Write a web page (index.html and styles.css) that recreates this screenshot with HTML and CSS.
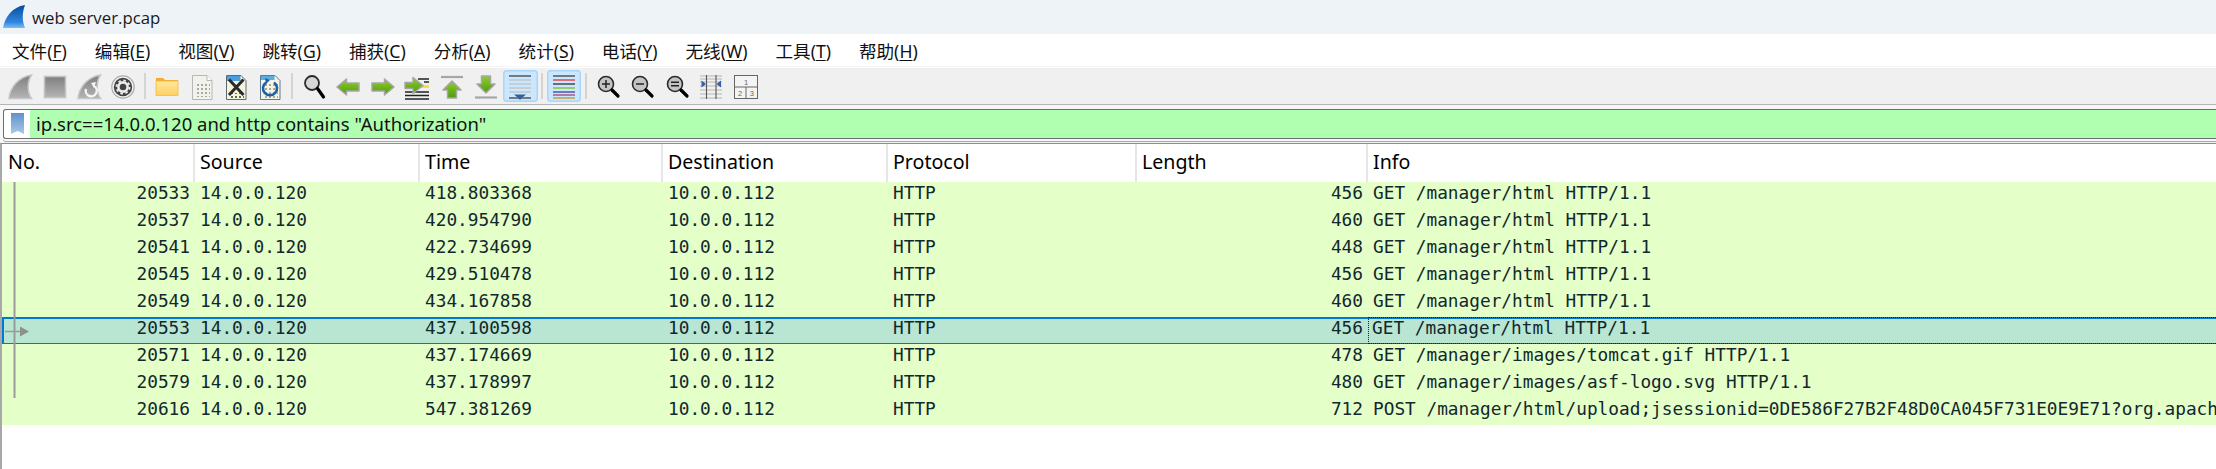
FILE: index.html
```html
<!DOCTYPE html>
<html lang="zh">
<head>
<meta charset="utf-8">
<title>web server.pcap</title>
<link rel="stylesheet" href="styles.css">
</head>
<body>
<svg class="defs" width="0" height="0">
  <defs>
    <linearGradient id="fin" x1="0" y1="0" x2="0" y2="1"><stop offset="0" stop-color="#0a4a9e"/><stop offset=".75" stop-color="#2f86e0"/><stop offset="1" stop-color="#7fbdf0"/></linearGradient>
    <linearGradient id="gfin" x1="0" y1="0" x2="0" y2="1"><stop offset="0" stop-color="#7f7f7f"/><stop offset="1" stop-color="#b4b4b4"/></linearGradient>
    <linearGradient id="folder" x1="0" y1="0" x2="0" y2="1"><stop offset="0" stop-color="#ffe9a0"/><stop offset="1" stop-color="#ffd060"/></linearGradient>
    <linearGradient id="green" x1="0" y1="0" x2="0" y2="1"><stop offset="0" stop-color="#8fcf2a"/><stop offset="1" stop-color="#4f9a10"/></linearGradient>
    <linearGradient id="mark" x1="0" y1="0" x2="0" y2="1"><stop offset="0" stop-color="#5f92cc"/><stop offset="1" stop-color="#a9c8e8"/></linearGradient>
    <pattern id="bits" width="4" height="4" patternUnits="userSpaceOnUse"><rect width="2" height="2" fill="#a9a99c"/></pattern>
    <pattern id="bitsd" width="4" height="4" patternUnits="userSpaceOnUse"><rect width="2" height="2" fill="#66665c"/></pattern>
  </defs>
</svg>

<header class="titlebar">
  <svg class="logo" width="24" height="24" viewBox="0 0 24 24"><path d="M1 23C3 12 10 2 23 0C20 8 20 16 23 23Z" fill="url(#fin)"/></svg>
  <span class="title">web server.pcap</span>
</header>

<nav class="menubar">
  <span class="menu">文件(<u>F</u>)</span>
  <span class="menu">编辑(<u>E</u>)</span>
  <span class="menu">视图(<u>V</u>)</span>
  <span class="menu">跳转(<u>G</u>)</span>
  <span class="menu">捕获(<u>C</u>)</span>
  <span class="menu">分析(<u>A</u>)</span>
  <span class="menu">统计(<u>S</u>)</span>
  <span class="menu">电话(<u>Y</u>)</span>
  <span class="menu">无线(<u>W</u>)</span>
  <span class="menu">工具(<u>T</u>)</span>
  <span class="menu">帮助(<u>H</u>)</span>
</nav>

<div class="toolbar">
  <span class="tool"><svg width="34" height="36" viewBox="0 0 34 36"><path d="M6 30.500C7 20 15 9 28.500 7C24 14 24 24 28.500 30.500Z" fill="url(#gfin)" stroke="#c6c6c6" stroke-width="1.500"/></svg></span>
  <span class="tool"><svg width="34" height="36" viewBox="0 0 34 36"><rect x="6.500" y="8.500" width="21" height="21" fill="url(#gfin)" stroke="#c2c2c2" stroke-width="1.600"/></svg></span>
  <span class="tool"><svg width="34" height="36" viewBox="0 0 34 36"><path d="M6 30.500C7 20 15 9 28.500 7C24 14 24 24 28.500 30.500Z" fill="url(#gfin)" stroke="#c6c6c6" stroke-width="1.500"/><path d="M14 21a5.500 5.500 0 1 0 8-3" fill="none" stroke="#f4f4f4" stroke-width="2.400"/><path d="M24 14l-5 1 3 5Z" fill="#f4f4f4"/></svg></span>
  <span class="tool"><svg width="34" height="36" viewBox="0 0 34 36"><circle cx="17" cy="19" r="11.200" fill="#f2f2f2" stroke="#ababab" stroke-width="1.200"/><circle cx="17" cy="19" r="9.200" fill="#444"/><circle cx="17" cy="19" r="4.600" fill="none" stroke="#ececec" stroke-width="2.600"/><circle cx="17" cy="19" r="6.600" fill="none" stroke="#ececec" stroke-width="1.800" stroke-dasharray="2.600 2.600"/></svg></span>
  <span class="sep"></span>
  <span class="tool"><svg width="34" height="36" viewBox="0 0 34 36"><path d="M6 27V10h7l2 2h13v3H6Z" fill="#f3ac2c"/><rect x="6" y="13" width="22" height="14.500" fill="url(#folder)" stroke="#f5b840" stroke-width=".8"/></svg></span>
  <span class="tool"><svg width="34" height="36" viewBox="0 0 34 36"><path d="M7.500 7.500H22L27 12.500V31.500H7.500Z" fill="#f2f2ec" stroke="#b6b6b6" stroke-width="1"/><path d="M22 7.500V12.500H27" fill="#fff" stroke="#b6b6b6"/><rect x="10" y="14" width="15" height="15" fill="url(#bits)"/></svg></span>
  <span class="tool"><svg width="34" height="36" viewBox="0 0 34 36"><path d="M7.500 7.500H22L27 12.500V31.500H7.500Z" fill="#f4f4dc" stroke="#5e6a72"/><path d="M8 8H21.500V13H8Z" fill="#4a9fdc"/><rect x="10" y="25" width="15" height="5" fill="url(#bitsd)"/><path d="M10 11.500L24.500 27M24.500 11.500L10 27" stroke="#2a2a2a" stroke-width="3"/></svg></span>
  <span class="tool"><svg width="34" height="36" viewBox="0 0 34 36"><path d="M7.500 7.500H22L27 12.500V31.500H7.500Z" fill="#f4f4e4" stroke="#5e7a92"/><path d="M8 8H21.500V12H8Z" fill="#5aaee4"/><rect x="10" y="15" width="15" height="15" fill="url(#bits)"/><path d="M13 14.500a7 7 0 1 0 8 0" fill="none" stroke="#1f5fa8" stroke-width="2.600"/><path d="M12 10l5 2-4 4Z" fill="#1f5fa8"/></svg></span>
  <span class="sep"></span>
  <span class="tool"><svg width="34" height="36" viewBox="0 0 34 36"><circle cx="15" cy="15" r="7" fill="#d6d6d6" stroke="#2a2a2a" stroke-width="1.800"/><path d="M20.500 20.500L26.500 29" stroke="#000" stroke-width="3.200" stroke-linecap="round"/></svg></span>
  <span class="tool"><svg width="34" height="36" viewBox="0 0 34 36"><path d="M6 19L15.500 11V15H28V23H15.500V27Z" fill="url(#green)" stroke="#a6a6a6" stroke-width="1.500" stroke-linejoin="round"/></svg></span>
  <span class="tool"><svg width="34" height="36" viewBox="0 0 34 36"><path d="M28 19L18.500 11V15H6V23H18.500V27Z" fill="url(#green)" stroke="#a6a6a6" stroke-width="1.500" stroke-linejoin="round"/></svg></span>
  <span class="tool"><svg width="34" height="36" viewBox="0 0 34 36"><path d="M18 11H29M24 14H29" stroke="#222" stroke-width="1.500"/><path d="M21 18.500H29" stroke="#f5dc50" stroke-width="3"/><path d="M5 24H29M5 27.500H29M5 31H29" stroke="#222" stroke-width="1.500"/><path d="M5 14.500H13V9.500L23 17.500L13 25.500V20.500H5Z" fill="url(#green)" stroke="#a6a6a6" stroke-width="1.500" stroke-linejoin="round"/></svg></span>
  <span class="tool"><svg width="34" height="36" viewBox="0 0 34 36"><path d="M6 9H28" stroke="#a6a6a6" stroke-width="2.200"/><path d="M17 13L26 22H21.500V30H12.500V22H8Z" fill="url(#green)" stroke="#a6a6a6" stroke-width="1.500" stroke-linejoin="round"/></svg></span>
  <span class="tool"><svg width="34" height="36" viewBox="0 0 34 36"><path d="M6 29.500H28" stroke="#a6a6a6" stroke-width="2.200"/><path d="M17 25L26 16H21.500V8H12.500V16H8Z" fill="url(#green)" stroke="#a6a6a6" stroke-width="1.500" stroke-linejoin="round"/></svg></span>
  <span class="tool on"><svg width="34" height="36" viewBox="0 0 34 36"><path d="M6 8H28" stroke="#333" stroke-width="1.200"/><path d="M6 12H28M6 16H28M6 20H28M6 24H28" stroke="#b8b8b0" stroke-width="1.200"/><path d="M6 30H28" stroke="#333" stroke-width="1.200"/><path d="M11 26.500H23L20 29H19.500L17 32L14.500 29H14Z" fill="#30609e"/></svg></span>
  <span class="sep"></span>
  <span class="tool on"><svg width="34" height="36" viewBox="0 0 34 36"><path d="M6 8H28" stroke="#333" stroke-width="1.200"/><path d="M6 12H28" stroke="#e02424" stroke-width="1.200"/><path d="M6 16H28" stroke="#222" stroke-width="1.200"/><path d="M6 20H28" stroke="#6cc010" stroke-width="1.200"/><path d="M6 24H28" stroke="#303090" stroke-width="1.200"/><path d="M6 27H28" stroke="#a03070" stroke-width="1.200"/><path d="M6 30H28" stroke="#c08a10" stroke-width="1.200"/></svg></span>
  <span class="sep"></span>
  <span class="tool"><svg width="34" height="36" viewBox="0 0 34 36"><circle cx="15" cy="16" r="7.500" fill="#c4c4c4" stroke="#2a2a2a" stroke-width="1.600"/><path d="M11 16H19M15 12V20" stroke="#222" stroke-width="1.500"/><path d="M21 22L27 28" stroke="#000" stroke-width="3.200" stroke-linecap="round"/></svg></span>
  <span class="tool"><svg width="34" height="36" viewBox="0 0 34 36"><circle cx="15" cy="16" r="7.500" fill="#c4c4c4" stroke="#2a2a2a" stroke-width="1.600"/><path d="M11 16H19" stroke="#222" stroke-width="1.500"/><path d="M21 22L27 28" stroke="#000" stroke-width="3.200" stroke-linecap="round"/></svg></span>
  <span class="tool"><svg width="34" height="36" viewBox="0 0 34 36"><circle cx="15" cy="16" r="7.500" fill="#c4c4c4" stroke="#2a2a2a" stroke-width="1.600"/><path d="M11 14.200H19M11 17.800H19" stroke="#222" stroke-width="1.500"/><path d="M21 22L27 28" stroke="#000" stroke-width="3.200" stroke-linecap="round"/></svg></span>
  <span class="tool"><svg width="34" height="36" viewBox="0 0 34 36"><path d="M6 8H28M6 11H28M6 14H28M6 18H28M6 22H28M6 26H28M6 30H28" stroke="#b4b4b4"/><path d="M12.500 7V31M22 7V31" stroke="#555" stroke-width="1.100"/><path d="M7.500 12.500L12 16L7.500 19.500ZM27 12.500L22.500 16L27 19.500Z" fill="#2f62ad"/></svg></span>
  <span class="tool"><svg width="34" height="36" viewBox="0 0 34 36"><rect x="5.500" y="7.500" width="23" height="23" fill="#f4f4f4" stroke="#666" stroke-width="1"/><path d="M5.500 19H28.500M17 19V30.500" stroke="#666"/><text class="pane-no" x="17" y="16.500">1</text><text class="pane-no" x="11.200" y="28">2</text><text class="pane-no" x="22.800" y="28">3</text></svg></span>
</div>

<div class="filterwrap">
  <div class="filter">
    <span class="bookmark"><svg width="13" height="22" viewBox="0 0 13 22"><path d="M0 0H13V21L6.500 18L0 21Z" fill="url(#mark)"/></svg></span>
    <span class="filtertext">ip.src==14.0.0.120 and http contains "Authorization"</span>
  </div>
</div>

<section class="packets">
  <div class="row head">
    <span class="h">No.</span><span class="h">Source</span><span class="h">Time</span><span class="h">Destination</span><span class="h">Protocol</span><span class="h">Length</span><span class="h">Info</span>
  </div>
  <div class="rows">
    <div class="row pkt"><span class="c r">20533</span><span class="c">14.0.0.120</span><span class="c">418.803368</span><span class="c">10.0.0.112</span><span class="c">HTTP</span><span class="c r">456</span><span class="c">GET /manager/html HTTP/1.1</span></div>
    <div class="row pkt"><span class="c r">20537</span><span class="c">14.0.0.120</span><span class="c">420.954790</span><span class="c">10.0.0.112</span><span class="c">HTTP</span><span class="c r">460</span><span class="c">GET /manager/html HTTP/1.1</span></div>
    <div class="row pkt"><span class="c r">20541</span><span class="c">14.0.0.120</span><span class="c">422.734699</span><span class="c">10.0.0.112</span><span class="c">HTTP</span><span class="c r">448</span><span class="c">GET /manager/html HTTP/1.1</span></div>
    <div class="row pkt"><span class="c r">20545</span><span class="c">14.0.0.120</span><span class="c">429.510478</span><span class="c">10.0.0.112</span><span class="c">HTTP</span><span class="c r">456</span><span class="c">GET /manager/html HTTP/1.1</span></div>
    <div class="row pkt"><span class="c r">20549</span><span class="c">14.0.0.120</span><span class="c">434.167858</span><span class="c">10.0.0.112</span><span class="c">HTTP</span><span class="c r">460</span><span class="c">GET /manager/html HTTP/1.1</span></div>
    <div class="row pkt sel"><span class="c r">20553</span><span class="c">14.0.0.120</span><span class="c">437.100598</span><span class="c">10.0.0.112</span><span class="c">HTTP</span><span class="c r">456</span><span class="c focus">GET /manager/html HTTP/1.1</span></div>
    <div class="row pkt"><span class="c r">20571</span><span class="c">14.0.0.120</span><span class="c">437.174669</span><span class="c">10.0.0.112</span><span class="c">HTTP</span><span class="c r">478</span><span class="c">GET /manager/images/tomcat.gif HTTP/1.1</span></div>
    <div class="row pkt"><span class="c r">20579</span><span class="c">14.0.0.120</span><span class="c">437.178997</span><span class="c">10.0.0.112</span><span class="c">HTTP</span><span class="c r">480</span><span class="c">GET /manager/images/asf-logo.svg HTTP/1.1</span></div>
    <div class="row pkt"><span class="c r">20616</span><span class="c">14.0.0.120</span><span class="c">547.381269</span><span class="c">10.0.0.112</span><span class="c">HTTP</span><span class="c r">712</span><span class="c">POST /manager/html/upload;jsessionid=0DE586F27B2F48D0CA045F731E0E9E71?org.apache.catalina.filters.CSRF_NONCE=1</span></div>
    <svg class="related" width="30" height="216" viewBox="0 0 30 216"><path d="M12.500 0V216" stroke="#9a9a9a" stroke-width="2"/><path d="M3 149.500H20" stroke="#9a9a9a" stroke-width="1.500"/><path d="M18 144.500L27 149.500L18 154.500Z" fill="#8f8f8f"/></svg>
  </div>
</section>
</body>
</html>
```
FILE: styles.css
```css
* { box-sizing: border-box; }
html, body { margin: 0; padding: 0; }
body {
  width: 2216px;
  height: 469px;
  overflow: hidden;
  background: #fff;
  font-family: "Open Sans", "Noto Sans CJK SC", sans-serif;
  color: #000;
}
.defs { position: absolute; }

.titlebar {
  height: 34px;
  background: #eef3f8;
  display: flex;
  align-items: center;
  padding-left: 2px;
  gap: 6px;
}
.logo { flex: none; margin-top: -1px; }
.title { font-size: 16.800px; color: #1a1a1a; }

.menubar {
  height: 32px;
  background: #fff;
  display: flex;
  align-items: center;
}
.menu {
  font-family: "Noto Sans", "Noto Sans CJK SC", sans-serif;
  font-size: 17.600px;
  padding: 0 15.900px 0 12px;
  white-space: nowrap;
  color: #111;
}
.menu u { text-underline-offset: 2px; }

.toolbar {
  height: 39px;
  background: #f0f0f0;
  border-top: 1px solid #f5f5f5;
  box-shadow: inset 0 1px 0 #fff;
  border-bottom: 1px solid #b5b5b5;
  display: flex;
  align-items: flex-start;
  padding: 1px 0 0 3px;
}
.tool {
  width: 34.400px;
  height: 36px;
  flex: none;
  display: flex;
  align-items: center;
  justify-content: center;
}
.tool svg { display: block; flex: none; }
.tool.on {
  background: #cce6fd;
  box-shadow: inset 0 0 0 1.500px #a6d6fb;
  border-radius: 4px;
  height: 32px;
  margin-top: 2px;
}
.sep {
  width: 2px;
  height: 26px;
  background: #d4d4d4;
  margin: 5px 3.700px 0;
  flex: none;
}
.pane-no {
  font-family: "Liberation Sans", sans-serif;
  font-size: 7.500px;
  fill: #666;
  text-anchor: middle;
}

.filterwrap {
  height: 38px;
  background: #f7f7f7;
  padding: 4px 0 0 3px;
}
.filter {
  height: 30px;
  border: 1px solid #6e6e6e;
  border-right: none;
  border-radius: 3px 0 0 3px;
  display: flex;
  background: #b0ffb0;
  box-shadow: 0 2px 0 #f7f7f7, 0 3px 0 #aaa, 0 4px 0 #f0f0f0;
}
.bookmark {
  width: 26px;
  flex: none;
  background: #fff;
  display: flex;
  align-items: center;
  justify-content: center;
  border-radius: 3px 0 0 3px;
}
.filtertext {
  font-family: "Noto Sans", sans-serif;
  font-size: 18.500px;
  line-height: 27px;
  padding-left: 6px;
  white-space: nowrap;
  color: #111;
}

.packets {
  border-left: 2px solid #a8a8a8;
  border-top: 1px solid #8a8d96;
  height: 327px;
  background: #fff;
}
.row {
  display: grid;
  grid-template-columns: 193px 225px 243px 225px 249px 231px minmax(0, 1fr);
  white-space: nowrap;
}
.head { height: 38px; }
.h {
  font-family: "Noto Sans", sans-serif;
  font-size: 19.600px;
  line-height: 36px;
  padding-left: 5px;
  border-right: 2px solid #e6e6e6;
  overflow: hidden;
}
.h:first-child { padding-left: 6px; }
.h:last-child { border-right: none; }
.rows { position: relative; }
.pkt {
  height: 27px;
  background: #e4ffc7;
  color: #12272e;
  font-family: "DejaVu Sans Mono", monospace;
  font-size: 17.770px;
  line-height: 23px;
}
.c { padding-left: 5px; overflow: hidden; }
.r { padding: 0 5px 0 0; text-align: right; }
.sel {
  background: #b8e6d2;
  box-shadow: inset 0 2px 0 #0078d4, inset 0 -1px 0 #0078d4, inset 2px 0 0 #0078d4;
}
.focus {
  border-left: 1px dotted #222;
  border-top: 1px dotted #222;
  border-bottom: 1px dotted #222;
  padding-left: 3px;
  line-height: 21px;
}
.related { position: absolute; left: 0; top: 0; }
```
